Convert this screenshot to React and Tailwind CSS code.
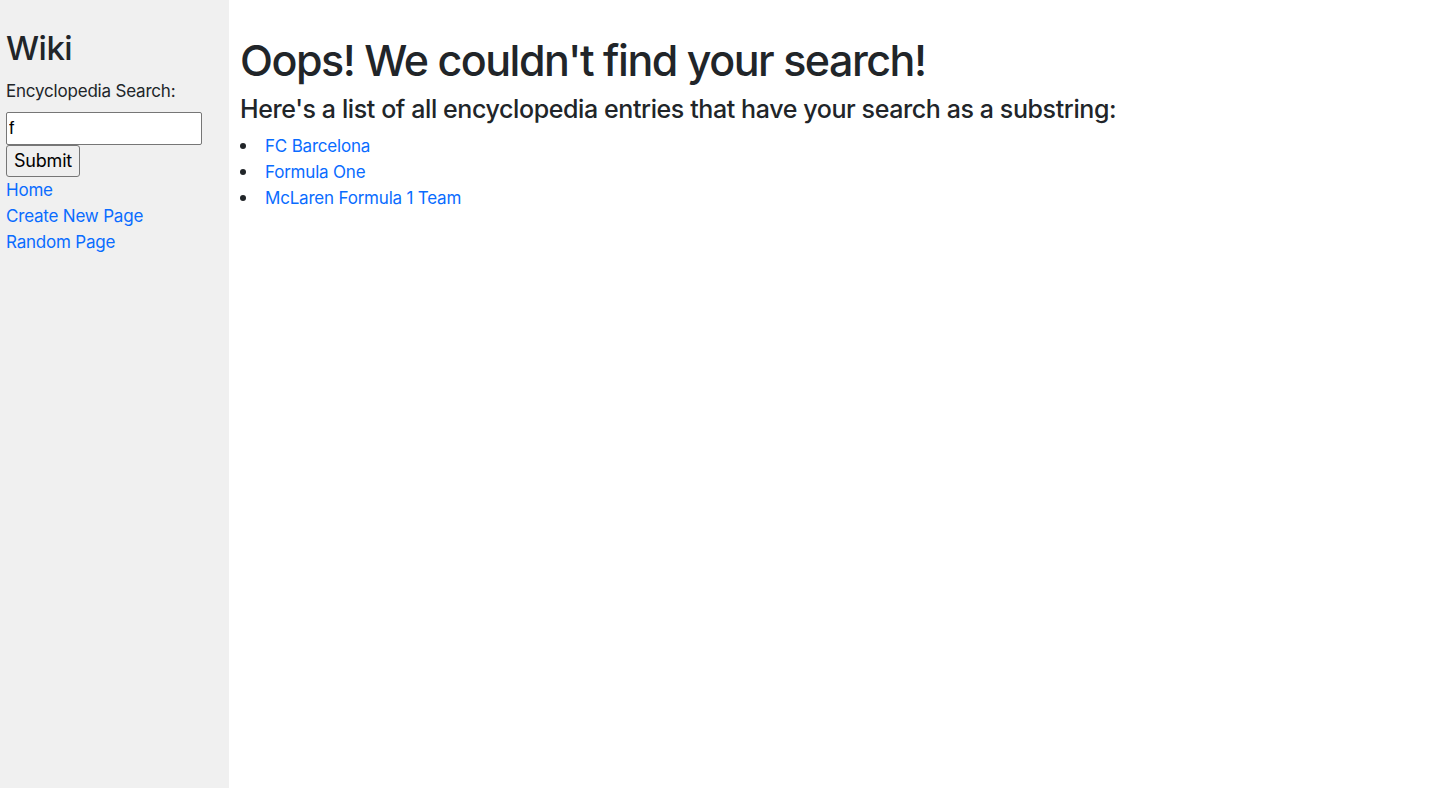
import React from 'react'

const links = ['Home', 'Create New Page', 'Random Page']
const entries = ['FC Barcelona', 'Formula One', 'McLaren Formula 1 Team']

export default function App() {
  return (
    <div className="flex min-h-[788px] text-[#212529] font-['Inter','Noto_Sans',sans-serif] text-[17px] leading-[26px] tracking-[-0.2px]">
      {/* sidebar */}
      <div className="w-[229px] shrink-0 bg-[#f0f0f0] pl-[6px] pt-[26px]">
        <h2 className="text-[33px] leading-[44px] font-medium tracking-[-0.5px] mb-[8px]">Wiki</h2>
        <form>
          <div className="mb-[8px]">Encyclopedia Search:</div>
          <input
            type="text"
            defaultValue="f"
            className="block w-[196px] h-[33px] px-[2px] bg-white border border-[#767676] rounded-[2px] text-[18px] text-black font-['Liberation_Sans',sans-serif]"
          />
          <button
            type="button"
            className="block h-[32px] px-[7px] bg-[#efefef] border border-[#767676] rounded-[3px] text-[18px] text-black"
          >
            Submit
          </button>
        </form>
        <div className="flex flex-col">
          {links.map(l => (
            <a key={l} href="#" className="text-[#0a6cff] w-fit">{l}</a>
          ))}
        </div>
      </div>

      {/* main */}
      <div className="flex-1 pl-[11px] pt-[32px]">
        <h1 className="text-[43px] leading-[56px] font-medium tracking-[-1.5px]">Oops! We couldn't find your search!</h1>
        <h3 className="text-[25px] leading-[30px] font-medium tracking-[-0.4px] mt-[6px] mb-[9px]">Here's a list of all encyclopedia entries that have your search as a substring:</h3>
        <ul>
          {entries.map(e => (
            <li key={e} className="flex items-center">
              <span className="w-[25px] shrink-0">
                <span className="block w-[6px] h-[6px] rounded-full bg-[#212529]"></span>
              </span>
              <a href="#" className="text-[#0a6cff]">{e}</a>
            </li>
          ))}
        </ul>
      </div>
    </div>
  )
}
